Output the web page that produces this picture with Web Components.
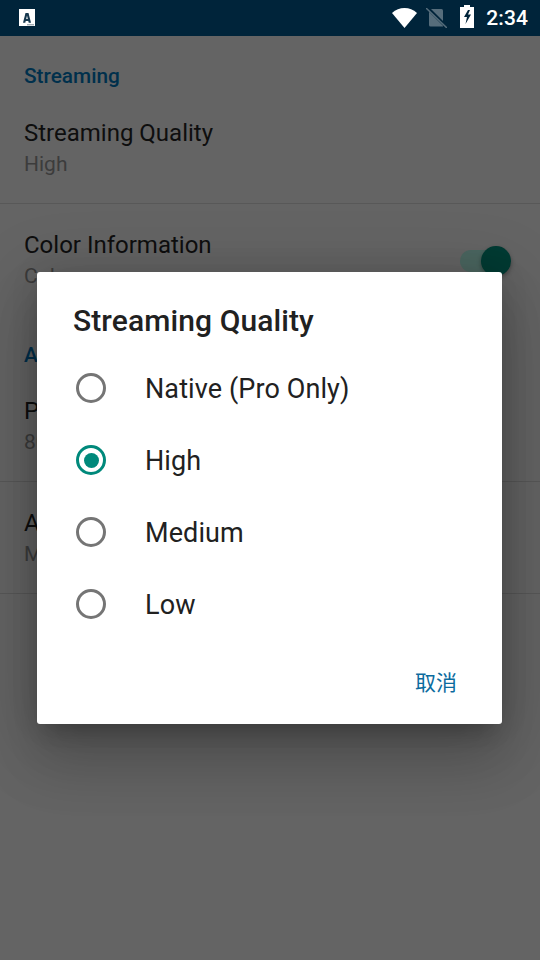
<!DOCTYPE html>
<html lang="en"><head><meta charset="utf-8"><title>Streaming Quality</title>
<style>
html,body{margin:0;padding:0;background:#646464}
body{width:540px;height:960px;overflow:hidden;position:relative;font-family:Roboto,"Noto Sans CJK SC",sans-serif}
</style></head><body>
<app-screen>
  <status-bar slot="bar" time="2:34"></status-bar>
  <settings-category>Streaming</settings-category>
  <settings-item title="Streaming Quality" value="High"></settings-item>
  <settings-item title="Color Information" value="Color" switch></settings-item>
  <settings-category>Audio</settings-category>
  <settings-item title="Port" value="8000"></settings-item>
  <settings-item title="Audio" value="Mono"></settings-item>
  <choice-dialog slot="dialog" heading="Streaming Quality" action="取消">
    <choice-option>Native (Pro Only)</choice-option>
    <choice-option checked>High</choice-option>
    <choice-option>Medium</choice-option>
    <choice-option>Low</choice-option>
  </choice-dialog>
</app-screen>
<script>
function def(name, css, html){
  customElements.define(name, class extends HTMLElement{
    connectedCallback(){
      if(this.shadowRoot) return;
      const r=this.attachShadow({mode:'open'});
      r.innerHTML='<style>'+css+'</style>'+(typeof html==='function'?html(this):html);
    }
  });
}
const esc=s=>String(s||'').replace(/&/g,'&amp;').replace(/</g,'&lt;');
def('app-screen',`
:host{display:flex;flex-direction:column;width:540px;height:960px;position:relative;background:#646464}
.list{flex:1;display:flex;flex-direction:column}
.scrim{position:absolute;left:0;right:0;top:36px;bottom:0;display:flex;justify-content:center;padding:236px 1px 0 0;box-sizing:border-box}
`,`<slot name="bar"></slot><div class="list"><slot></slot></div><div class="scrim"><slot name="dialog"></slot></div>`);
def('status-bar',`
:host{display:flex;align-items:center;height:36px;background:#00243a;color:#fff;padding:0 12px 0 19px;box-sizing:border-box;flex:none}
.app{width:16px;height:17px;display:block;margin-top:-1px}
.sp{flex:1}
.icons{display:flex;align-items:center}
.t{font:500 21px/36px Roboto,sans-serif;margin-left:12px;letter-spacing:.1px}
svg{display:block}
`,el=>`<svg class="app" viewBox="0 0 16 17"><rect width="16" height="17" fill="#fff"/><path fill-rule="evenodd" d="M6.500 4h3L12 13.700H9.700L9.300 12H6.700l-.4 1.700H4zM7.200 10h1.600L8 6.500z" fill="#16384e"/><rect x="8" y="15.300" width="7" height="1" fill="#7d8b94"/></svg>
<span class="sp"></span><span class="icons">
<svg width="25" height="20" viewBox="0 0 25 20" style="margin-right:9px"><path d="M12.500 20 0 5Q5.500 0 12.500 0T25 5z" fill="#fff"/></svg>
<svg width="21" height="20" viewBox="0 0 21 20" style="margin-right:13px"><path d="M3 1h12.500a1.500 1.500 0 0 1 1.500 1.500V18.500H4.500A1.500 1.500 0 0 1 3 17z" fill="#566d7b"/><path d="M-1 2 18 21" stroke="#00243a" stroke-width="3.400" transform="translate(2.200 -2.400)"/><path d="M0 0 21 20" stroke="#566d7b" stroke-width="1.500"/></svg>
<svg width="14" height="23" viewBox="0 0 14 23" style="margin-top:-3px"><path d="M4 0h6v2h4v21H0V2h4z" fill="#fff"/><path d="M8 5 4 12h3L5.500 19 11 9.500H8L10 5z" fill="#00243a"/></svg>
</span><span class="t">${esc(el.getAttribute('time'))}</span>`);
def('settings-category',`
:host{display:block;box-sizing:border-box;height:55.5px;padding:22px 0 0 24px;font:500 20.800px/36px Roboto,sans-serif;color:#00304c}
`,`<slot></slot>`);
def('settings-item',`
:host{display:flex;align-items:center;box-sizing:border-box;height:112px;padding:0 24px;border-bottom:1.5px solid #585858;color:#0e0e0e;font-family:Roboto,sans-serif}
:host([switch]){height:111px;border-bottom:0;padding-top:1px;padding-bottom:.5px}
.m{flex:1;min-width:0}
.t{font-size:24px;line-height:32px}
.v{font-size:21px;line-height:28px;color:#3c3c3c;margin-top:1px}
.sw{width:51px;height:36px;position:relative;margin-right:5px;margin-top:3px}
.tr{position:absolute;left:0;top:7px;width:45px;height:22px;border-radius:11px;background:#4b6660}
.th{position:absolute;right:0;top:3px;width:30px;height:30px;border-radius:50%;background:#003b33;box-shadow:0 2px 4px rgba(0,0,0,.35)}
`,el=>`<div class="m"><div class="t">${esc(el.getAttribute('title'))}</div><div class="v">${esc(el.getAttribute('value'))}</div></div>${el.hasAttribute('switch')?'<div class="sw"><div class="tr"></div><div class="th"></div></div>':''}`);
def('choice-dialog',`
:host{display:flex;flex-direction:column;width:465px;height:452px;box-sizing:border-box;background:#fff;border-radius:3px;box-shadow:0 36px 57px 4px rgba(0,0,0,.14),0 14px 69px 12px rgba(0,0,0,.14),0 16px 22px -10px rgba(0,0,0,.2),0 0 30px rgba(0,0,0,.08);font-family:Roboto,sans-serif;color:#212121}
h2{margin:0;padding:31px 36px 0;font:500 30px/36px Roboto,sans-serif;letter-spacing:.1px}
.opts{padding-top:13px;flex:1}
.act{height:72px;display:flex;justify-content:flex-end;align-items:center;padding:0 45px 14px 0;box-sizing:border-box;color:#0b6b9e;font:21px/30px "Noto Sans CJK SC",Roboto,sans-serif}
`,el=>`<h2>${esc(el.getAttribute('heading'))}</h2><div class="opts"><slot></slot></div><div class="act">${esc(el.getAttribute('action'))}</div>`);
def('choice-option',`
:host{display:flex;align-items:center;height:72px;padding-left:39px;font:27px/36px Roboto,sans-serif;letter-spacing:.1px;color:#212121}
.r{width:30px;height:30px;box-sizing:border-box;border:3px solid #757575;border-radius:50%;margin-right:39px;display:flex;align-items:center;justify-content:center;flex:none}
.l{padding-top:2px}
:host([checked]) .r{border-color:#00897b}
:host([checked]) .r::after{content:"";width:15px;height:15px;border-radius:50%;background:#00897b}
`,`<span class="r"></span><span class="l"><slot></slot></span>`);
</script>
</body></html>
